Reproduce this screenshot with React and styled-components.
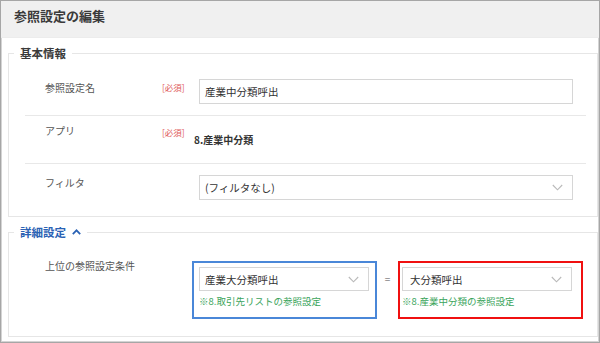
import React from "react";
import styled, { createGlobalStyle } from "styled-components";

const GlobalStyle = createGlobalStyle`
  html, body {
    margin: 0;
    padding: 0;
    background: #ffffff;
  }
  body {
    font-family: "Noto Sans CJK JP", "Noto Sans", sans-serif;
    color: #333;
  }
`;

const Frame = styled.div`
  width: 600px;
  height: 343px;
  box-sizing: border-box;
  border: 1px solid #a6a6a6;
  box-shadow: inset 1px 1px 0 #d4d4d4, inset -1px -1px 0 #d4d4d4;
  background: #fff;
  overflow: hidden;
`;

const Header = styled.div`
  height: 37px;
  background: #f0f0f0;
  padding: 6px 0 0 13px;
  box-sizing: border-box;
  border-bottom: 1px solid #ececec;
`;

const Title = styled.h1`
  margin: 0;
  font-size: 13px;
  line-height: 18px;
  font-weight: 700;
  color: #3a3a3a;
`;

const Body = styled.div`
  padding: 7px 1px 0 7px;
`;

const Fieldset = styled.fieldset`
  margin: ${(p) => p.$mt || 0}px 0 0 0;
  padding: ${(p) => p.$pt}px 0 ${(p) => p.$pb}px 0;
  border: 1px solid #e6e6e6;
  min-width: 0;
`;

const Legend = styled.legend`
  margin-left: 5px;
  padding: 0 6px 0 6px;
  font-size: 11.5px;
  line-height: 16px;
  font-weight: 700;
  color: ${(p) => (p.$accent ? "#2a62b4" : "#3a3a3a")};
  display: flex;
  align-items: center;
  gap: 6px;
`;

const Chevron = styled.svg`
  width: 9px;
  height: 6px;
`;

const Row = styled.div`
  display: flex;
  align-items: flex-start;
  margin: 0 11px 0 16px;
  padding: ${(p) => p.$pt || 11}px 13px 11px 20px;
  border-bottom: ${(p) => (p.$last ? "none" : "1px solid #e8e8e8")};
`;

const Label = styled.div`
  width: ${(p) => p.$w || 117}px;
  flex-shrink: 0;
  font-size: 10px;
  line-height: 16px;
  color: #555;
  margin-top: ${(p) => p.$mt || 0}px;
`;

const Required = styled.div`
  width: 37px;
  flex-shrink: 0;
  font-size: 8.5px;
  line-height: 12px;
  color: #e05a5a;
  margin-top: ${(p) => p.$mt || 0}px;
`;

const Value = styled.div`
  flex: 1;
  height: 25px;
  display: flex;
  align-items: center;
  margin-left: ${(p) => p.$ml || 0}px;
  font-size: 10px;
  font-weight: ${(p) => (p.$bold ? 700 : 400)};
  color: #333;
`;

const Field = styled.div`
  flex: ${(p) => (p.$grow ? 1 : "none")};
  height: ${(p) => p.$h || 25}px;
  box-sizing: border-box;
  border: 1px solid #d6d6d6;
  background: #fff;
  display: flex;
  align-items: center;
  justify-content: space-between;
  padding: 0 9px 0 ${(p) => p.$pl || 5}px;
  font-size: 10.5px;
  color: #333;
`;

const Arrow = styled.svg`
  width: 11px;
  height: 7px;
  flex-shrink: 0;
`;

const Conditions = styled.div`
  display: flex;
  align-items: flex-start;
`;

const MarkBox = styled.div`
  width: 185px;
  box-sizing: border-box;
  border: 2px solid ${(p) => p.$color};
  padding: 4px ${(p) => p.$pr}px 9px ${(p) => p.$pl}px;
`;

const Note = styled.div`
  margin-top: 3px;
  font-size: 9.5px;
  line-height: 14px;
  color: #3aa45b;
  white-space: nowrap;
`;

const Equals = styled.div`
  width: 21px;
  text-align: center;
  margin-top: 6px;
  line-height: 24px;
  font-size: 10px;
  color: #888;
`;

const DownArrow = () => (
  <Arrow viewBox="0 0 11 7">
    <path d="M0.8 1 L5.5 5.8 L10.2 1" fill="none" stroke="#b9b9b9" strokeWidth="1.1" />
  </Arrow>
);

const Select = ({ children, pl, h }) => (
  <Field $grow $pl={pl} $h={h}>
    <span>{children}</span>
    <DownArrow />
  </Field>
);

export default function App() {
  return (
    <>
      <GlobalStyle />
      <Frame>
        <Header>
          <Title>参照設定の編集</Title>
        </Header>
        <Body>
          <Fieldset $pt={7} $pb={5}>
            <Legend>基本情報</Legend>
            <Row>
              <Label $mt={1}>参照設定名</Label>
              <Required $mt={2}>[必須]</Required>
              <Field $grow>産業中分類呼出</Field>
            </Row>
            <Row>
              <Label $mt={-4}>アプリ</Label>
              <Required $mt={-1}>[必須]</Required>
              <Value $bold $ml={-5}>8.産業中分類</Value>
            </Row>
            <Row $last>
              <Label $mt={0}>フィルタ</Label>
              <Required />
              <Select>(フィルタなし)</Select>
            </Row>
          </Fieldset>
          <Fieldset $mt={7} $pt={0} $pb={6}>
            <Legend $accent>
              詳細設定
              <Chevron viewBox="0 0 9 6">
                <path d="M0.8 5.2 L4.5 1.3 L8.2 5.2" fill="none" stroke="#2a62b4" strokeWidth="1.7" />
              </Chevron>
            </Legend>
            <Row $last $pt={21}>
              <Label $w={147} $mt={-3}>上位の参照設定条件</Label>
              <Conditions>
                <MarkBox $color="#4a87d8" $pl={5} $pr={6}>
                  <Select h={24}>産業大分類呼出</Select>
                  <Note>※8.取引先リストの参照設定</Note>
                </MarkBox>
                <Equals>=</Equals>
                <MarkBox $color="#f01010" $pl={2} $pr={9}>
                  <Select h={24} pl={7}>大分類呼出</Select>
                  <Note>※8.産業中分類の参照設定</Note>
                </MarkBox>
              </Conditions>
            </Row>
          </Fieldset>
        </Body>
      </Frame>
    </>
  );
}
